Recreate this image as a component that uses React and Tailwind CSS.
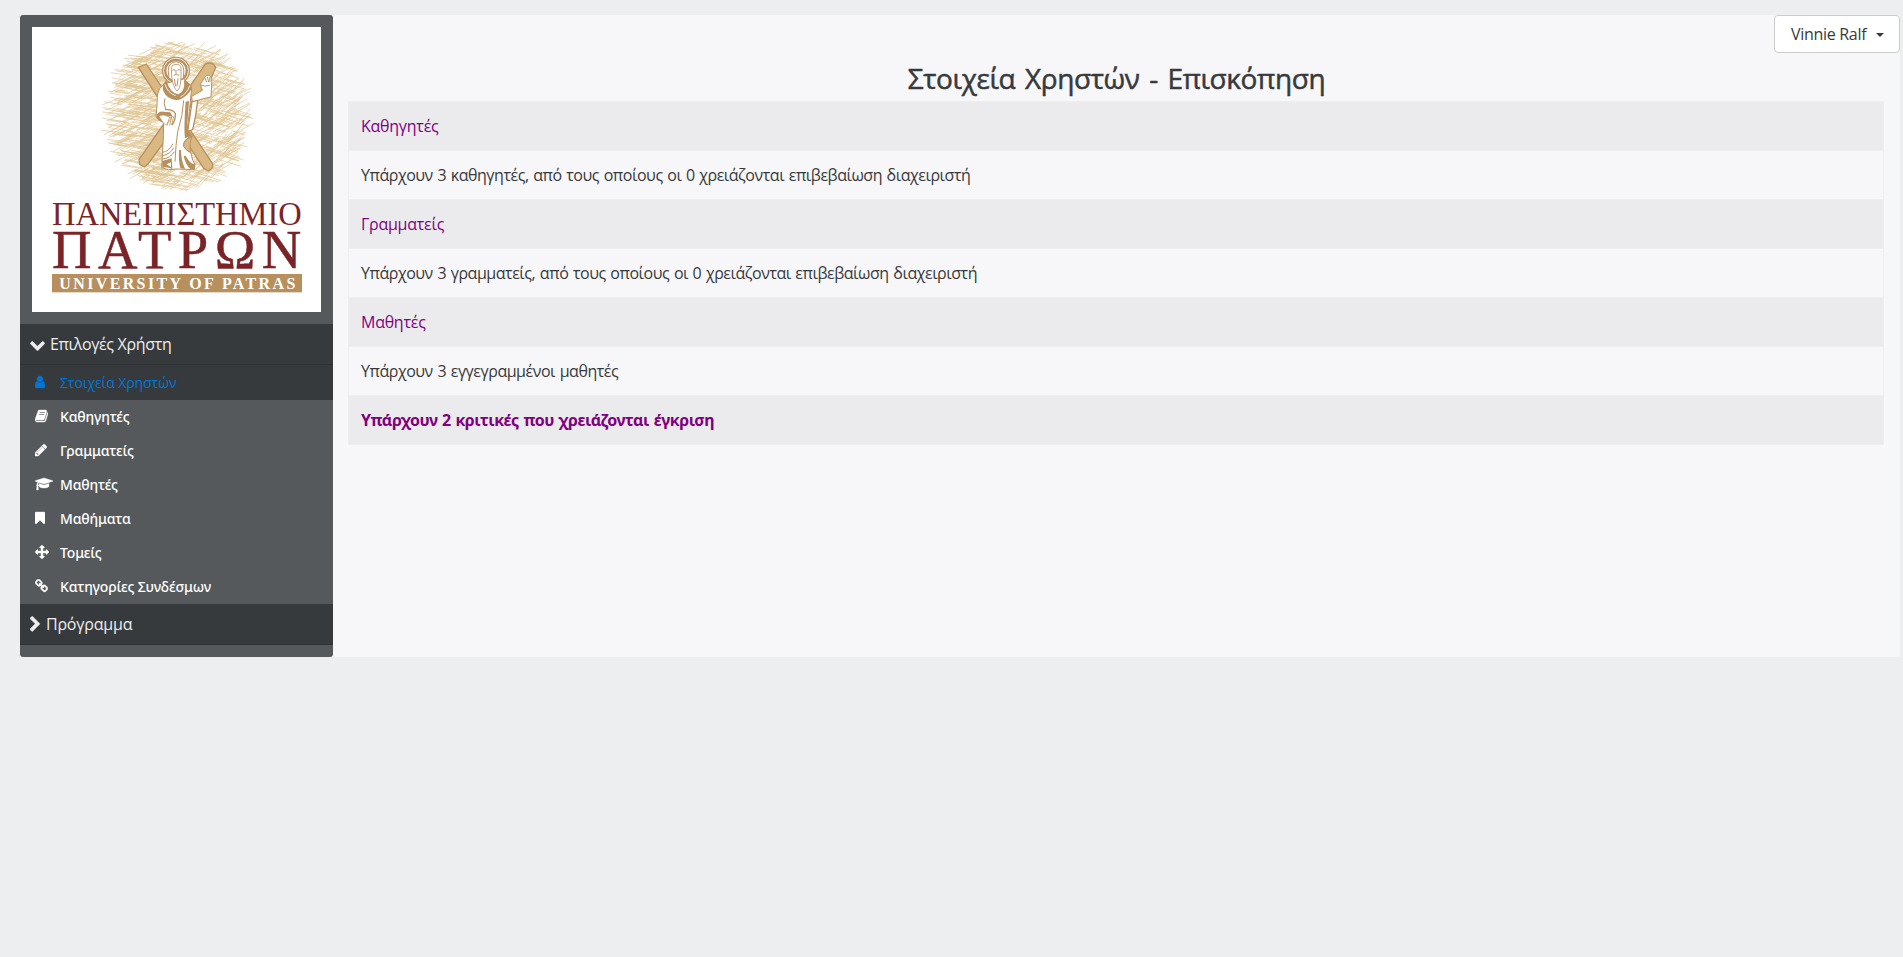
import React from 'react';

const ICONS = {
  down: {
    box: '65 180 1662 1400',
    d: 'M1683 808l-742 741q-19 19-45 19t-45-19l-742-741q-19-19-19-45.5t19-45.5l166-165q19-19 45-19t45 19l531 531 531-531q19-19 45-19t45 19l166 165q19 19 19 45.5t-19 45.5z',
  },
  right: {
    box: '340 0 1100 1700',
    d: 'M1363 877l-742 742q-19 19-45 19t-45-19l-166-166q-19-19-19-45t19-45l531-531-531-531q-19-19-19-45t19-45l166-166q19-19 45-19t45 19l742 742q19 19 19 45t-19 45z',
  },
  user: {
    box: '256 0 1280 1792',
    d: 'M1536 1399q0 109-62.5 187t-150.5 78h-854q-88 0-150.5-78t-62.5-187q0-85 8.5-160.5t31.5-152 58.5-131 94-89 134.5-34.5q131 128 313 128t313-128q76 0 134.5 34.5t94 89 58.5 131 31.5 152 8.5 160.5zm-256-887q0 159-112.5 271.5t-271.5 112.5-271.5-112.5-112.5-271.5 112.5-271.5 271.5-112.5 271.5 112.5 112.5 271.5z',
  },
  book: {
    box: '64 0 1664 1792',
    d: 'M1703 478q40 57 18 129l-275 906q-19 64-76.5 107.5t-122.5 43.5h-923q-77 0-148.5-53.5t-99.5-131.5q-24-67-2-127 0-4 3-27t4-37q1-8-3-21.5t-3-19.5q2-11 8-21t16.5-23.5 16.5-23.5q23-38 45-91.5t30-91.5q3-10 .5-30t-.5-28q3-11 17-28t17-23q21-36 42-92t25-90q1-9-2.5-32t.5-28q4-13 22-30.5t22-22.5q19-26 42.5-84.5t27.5-96.5q1-8-3-25.5t-2-26.5q2-8 9-18t18-23 17-21q8-12 16.5-30.5t15-35 16-36 19.5-32 26.5-23.5 36-11.5 47.5 5.5l-1 3q38-9 51-9h761q74 0 114 56t18 130l-274 906q-36 119-71.5 153.5t-128.5 34.5h-869q-27 0-38 15-11 16-1 43 24 70 144 70h923q29 0 56-15.5t35-41.5l300-987q7-22 5-57 38 15 59 43zm-1064 2q-4 13 2 22.5t20 9.5h608q13 0 25.5-9.5t16.5-22.5l21-64q4-13-2-22.5t-20-9.5h-608q-13 0-25.5 9.5t-16.5 22.5zm-83 256q-4 13 2 22.5t20 9.5h608q13 0 25.5-9.5t16.5-22.5l21-64q4-13-2-22.5t-20-9.5h-608q-13 0-25.5 9.5t-16.5 22.5z',
  },
  pencil: {
    box: '128 0 1536 1792',
    d: 'M491 1536l91-91-235-235-91 91v107h128v128h107zm523-928q0-22-22-22-10 0-17 7l-542 542q-7 7-7 17 0 22 22 22 10 0 17-7l542-542q7-7 7-17zm-54-192l416 416-832 832h-416v-416zm683 96q0 53-37 90l-166 166-416-416 166-165q36-38 90-38 53 0 91 38l235 234q37 39 37 91z',
  },
  cap: {
    box: '0 0 2304 1792',
    d: 'M1774 836l18 316q4 69-82 128t-235 93.5-323 34.5-323-34.5-235-93.5-82-128l18-316 574 181q22 7 48 7t48-7zm530-324q0 23-22 31l-1120 352q-4 1-10 1t-10-1l-652-206q-43 34-71 111.5t-34 178.5q63 36 63 109 0 69-58 107l58 433q2 14-8 25-9 11-24 11h-192q-15 0-24-11-10-11-8-25l58-433q-58-38-58-107 0-73 65-111 11-207 98-330l-333-104q-22-8-22-31t22-31l1120-352q4-1 10-1t10 1l1120 352q22 8 22 31z',
  },
  bookmark: {
    box: '256 0 1280 1792',
    d: 'M1420 128q23 0 44 9 33 13 52.5 41t19.5 62v1289q0 34-19.5 62t-52.5 41q-19 8-44 8-48 0-83-32l-441-424-441 424q-36 33-83 33-23 0-44-9-33-13-52.5-41t-19.5-62v-1289q0-34 19.5-62t52.5-41q21-9 44-9h1048z',
  },
  arrows: {
    box: '0 0 1792 1792',
    d: 'M1792 896q0 26-19 45l-256 256q-19 19-45 19t-45-19-19-45v-128h-384v384h128q26 0 45 19t19 45-19 45l-256 256q-19 19-45 19t-45-19l-256-256q-19-19-19-45t19-45 45-19h128v-384h-384v128q0 26-19 45t-45 19-45-19l-256-256q-19-19-19-45t19-45l256-256q19-19 45-19t45 19 19 45v128h384v-384h-128q-26 0-45-19t-19-45 19-45l256-256q19-19 45-19t45 19l256 256q19 19 19 45t-19 45-45 19h-128v384h384v-128q0-26 19-45t45-19 45 19l256 256q19 19 19 45z',
  },
  link: {
    box: '64 0 1664 1792',
    d: 'M1520 1216q0-40-28-68l-208-208q-28-28-68-28-42 0-72 32 3 3 19 18.5t21.5 21.5 15 19 13 25.5 3.5 27.5q0 40-28 68t-68 28q-15 0-27.5-3.5t-25.5-13-19-15-21.5-21.5-18.5-19q-33 31-33 73 0 40 28 68l206 207q27 27 68 27 40 0 68-26l147-146q28-28 28-67zm-703-705q0-40-28-68l-206-207q-28-28-68-28-39 0-68 27l-147 146q-28 28-28 67 0 40 28 68l208 208q27 27 68 27 42 0 72-31-3-3-19-18.5t-21.5-21.5-15-19-13-25.5-3.5-27.5q0-40 28-68t68-28q15 0 27.5 3.5t25.5 13 19 15 21.5 21.5 18.5 19q33-31 33-73zm895 705q0 120-85 203l-147 146q-83 83-203 83-121 0-204-85l-206-207q-83-83-83-203 0-123 88-209l-88-88q-86 88-208 88-120 0-204-84l-208-208q-84-84-84-204t85-203l147-146q83-83 203-83 121 0 204 85l206 207q83 83 83 203 0 123-88 209l88 88q86-88 208-88 120 0 204 84l208 208q84 84 84 204z',
  },
};

function Icon({ name, className }) {
  const icon = ICONS[name];
  return (
    <svg viewBox={icon.box} className={'shrink-0 fill-current stroke-current ' + className} preserveAspectRatio="xMinYMid meet">
      <path d={icon.d} strokeWidth="50" />
    </svg>
  );
}

// Deterministic pencil hatching that fills the disc behind the figure.
function makeHatching() {
  let seed = 11;
  const rnd = () => {
    seed = (seed * 16807) % 2147483647;
    return seed / 2147483647;
  };
  const families = [
    { angle: 9, count: 330, side: -1 },
    { angle: -26, count: 230, side: -1 },
    { angle: -28, count: 200, side: 1 },
    { angle: -46, count: 130, side: 1 },
    { angle: 16, count: 200, side: 1 },
  ];
  let d = '';
  families.forEach(({ angle, count, side }) => {
    for (let i = 0; i < count; i++) {
      const t = rnd() * Math.PI * 2;
      const r = Math.sqrt(rnd());
      let x = 502 + Math.cos(t) * r * 202;
      const y = 333 + Math.sin(t) * r * 218;
      if (side < 0 && x > 540) x = 1004 - x;
      if (side > 0 && x < 440) x = 1004 - x;
      const half = 14 + rnd() * 24;
      const a = ((angle + (rnd() - 0.5) * 7) * Math.PI) / 180;
      const dx = Math.cos(a) * half;
      const dy = Math.sin(a) * half;
      d += `M${(x - dx).toFixed(1)} ${(y - dy).toFixed(1)}L${(x + dx).toFixed(1)} ${(y + dy).toFixed(1)}`;
    }
  });
  return d;
}
const HATCHING = makeHatching();

function Logo() {
  return (
    <svg viewBox="66 66 867 855" className="block h-[285px] w-[289px] bg-white" preserveAspectRatio="none">
      <path d={HATCHING} stroke="#dfc592" strokeWidth="2.1" fill="none" strokeLinecap="round" />
      <g transform="translate(255 90)" strokeLinejoin="round">
        <path d="M130 97L154 87L350 382Q357 392 350 401L340 408L326 400Z" fill="#dab882" stroke="#b8905d" strokeWidth="4" />
        <path d="M330 88Q342 80 356 88L362 98L350 125L160 386L148 396L134 388L132 374L318 106Z" fill="#dab882" stroke="#b8905d" strokeWidth="4" />
        <circle cx="243" cy="107" r="42" fill="#b8905d" />
        <circle cx="243" cy="107" r="37.5" fill="none" stroke="#fff" strokeWidth="2.5" />
        <circle cx="243" cy="107" r="29" fill="#fff" />
        <path d="M222 128Q212 82 243 80Q273 82 265 128" fill="#fff" stroke="#b8905d" strokeWidth="3" />
        <path d="M316 148L329 127Q335 118 343 121Q352 128 350 150L348 186Q322 190 292 202L290 184Q305 176 322 166Z" fill="#fff" stroke="#b8905d" strokeWidth="3" />
        <path d="M330 128l5 14M337 125l4 16M344 127l1 15M318 150q12 6 26 1" fill="none" stroke="#b8905d" strokeWidth="3" />
        <path d="M291 200L308 196Q304 240 293 284L278 290Z" fill="#fff" stroke="#b8905d" strokeWidth="4" />
        <path d="M208 146Q190 160 187 180Q187 212 183 244Q190 258 206 262Q206 300 203 345L200 398L220 404L246 402L298 404Q304 390 292 372L288 354Q264 340 266 326Q272 308 292 303L277 284L284 220L290 160Q282 142 266 132Z" fill="#fff" stroke="#b8905d" strokeWidth="3" />
        <path d="M214 134Q200 150 204 166Q214 194 246 196Q274 190 292 158Q282 142 267 135Q272 168 250 178Q224 174 214 134Z" fill="#b8905d" />
        <path d="M210 148q8 26 32 34M284 152q-8 24-28 34" fill="none" stroke="#fff" strokeWidth="2.5" />
        <path d="M229 98Q230 88 243 88Q257 88 258 98L258 120Q258 160 246 168Q234 158 230 124Z" fill="#fff" stroke="#b8905d" strokeWidth="2.5" />
        <path d="M232 106q5-4 9 0M247 106q5-4 9 0M243 106v10M236 121q8-6 16 0M238 132l4 22M249 130l-3 24" fill="none" stroke="#a67c48" strokeWidth="2.5" />
        <path d="M183 246Q188 228 206 230L226 232L234 246Q222 240 210 248L206 262Q190 260 183 246Z" fill="#b8905d" />
        <path d="M210 224Q234 222 241 236Q242 256 231 270" fill="none" stroke="#b8905d" strokeWidth="4" />
        <path d="M192 244q12-8 26 0l12 4-8 12-10 10-8-8z" fill="#fff" stroke="#b8905d" strokeWidth="2" />
        <path d="M224 246l-8 26M230 244l-6 28M236 244l-6 26" stroke="#b8905d" strokeWidth="2.5" />
        <path d="M210 190q-6 16 2 32M266 196Q264 240 248 290Q242 330 240 380" fill="none" stroke="#b8905d" strokeWidth="3" />
        <path d="M272 200L282 198L276 280L290 302L270 310Q266 280 272 200Z" fill="#b8905d" />
        <path d="M202 352Q222 350 234 326M202 362Q226 358 236 338M202 372Q226 370 238 350" fill="none" stroke="#b8905d" strokeWidth="3" />
        <path d="M201 378L230 370L232 402Q214 394 202 398ZM252 345Q250 378 256 400L270 402Q258 374 258 345ZM266 364Q272 390 286 402L300 402L300 388Q284 386 272 362Z" fill="#b8905d" />
        <path d="M292 303Q262 318 266 334Q272 346 288 352Q280 328 292 303Z" fill="#dab882" stroke="#b8905d" strokeWidth="3" />
        <path d="M214 388l14-6v14z" fill="#fff" />
      </g>
      <g fill="#7b2427" fontFamily="'Liberation Serif', serif">
        <text x="126" y="659" fontSize="98" textLength="749" lengthAdjust="spacingAndGlyphs">ΠΑΝΕΠΙΣΤΗΜΙΟ</text>
        <text x="126" y="788" fontSize="164" textLength="748" stroke="#7b2427" strokeWidth="1.5" lengthAdjust="spacing">ΠΑΤΡΩΝ</text>
      </g>
      <rect x="126" y="807" width="750" height="55" fill="#b8905d" />
      <text x="148" y="851" fontSize="48" fontWeight="700" fill="#fff" fontFamily="'Liberation Serif', serif" textLength="708" lengthAdjust="spacing">UNIVERSITY OF PATRAS</text>
    </svg>
  );
}

const MENU = [
  { icon: 'book', size: 'h-[14px] w-[13px]', label: 'Καθηγητές' },
  { icon: 'pencil', size: 'h-[14px] w-[12px]', label: 'Γραμματείς' },
  { icon: 'cap', size: 'h-[14px] w-[18px]', label: 'Μαθητές' },
  { icon: 'bookmark', size: 'h-[14px] w-[10px]', label: 'Μαθήματα' },
  { icon: 'arrows', size: 'h-[14px] w-[14px]', label: 'Τομείς' },
  { icon: 'link', size: 'h-[14px] w-[13px]', label: 'Κατηγορίες Συνδέσμων' },
];

const ROWS = [
  { kind: 'link', text: 'Καθηγητές' },
  { kind: 'text', text: 'Υπάρχουν 3 καθηγητές, από τους οποίους οι 0 χρειάζονται επιβεβαίωση διαχειριστή' },
  { kind: 'link', text: 'Γραμματείς' },
  { kind: 'text', text: 'Υπάρχουν 3 γραμματείς, από τους οποίους οι 0 χρειάζονται επιβεβαίωση διαχειριστή' },
  { kind: 'link', text: 'Μαθητές' },
  { kind: 'text', text: 'Υπάρχουν 3 εγγεγραμμένοι μαθητές' },
  { kind: 'bold', text: 'Υπάρχουν 2 κριτικές που χρειάζονται έγκριση' },
];

const ROW_STYLE = {
  link: 'bg-[#ebebed] text-[#800080] tracking-[-0.25px]',
  text: 'text-[#373a3c] tracking-[-0.46px] [word-spacing:0.9px]',
  bold: "bg-[#ebebed] text-[#800080] font-bold font-['Noto_Sans',sans-serif] tracking-[-0.46px] [word-spacing:0.9px]",
};

export default function App() {
  return (
    <div className="min-h-screen bg-[#eceeef] pt-[15px] pr-[3px] pl-5 font-['Open_Sans','Noto_Sans',sans-serif] text-base leading-6 text-[#373a3c]">
      <div className="flex h-[642px] bg-[#f7f7f9]">
        <aside className="w-[313px] shrink-0 rounded-[3px] bg-[#55595c] pt-3 text-white">
          <div className="px-3 pb-3">
            <Logo />
          </div>
          <div className="flex h-[41px] items-center border-b border-[#2f3335] bg-[#373a3c] pl-[10px] text-[#eceeef]">
            <Icon name="down" className="mt-px h-[13px] w-[15px]" />
            <span className="ml-[5px] tracking-[-0.34px]">Επιλογές Χρήστη</span>
          </div>
          <div className="flex h-[35px] items-center bg-[#373a3c] pl-[15px] text-sm text-[#0275d8]">
            <div className="mb-[2px] flex w-[25px]">
              <Icon name="user" className="h-[14px] w-[10px]" />
            </div>
            <span className="tracking-[-0.08px]">Στοιχεία Χρηστών</span>
          </div>
          {MENU.map((item) => (
            <div key={item.label} className="flex h-[34px] items-center pl-[15px] text-sm font-medium">
              <div className="mb-[2px] flex w-[25px]">
                <Icon name={item.icon} className={item.size} />
              </div>
              <span className="font-['Noto_Sans',sans-serif] tracking-[-0.15px]">{item.label}</span>
            </div>
          ))}
          <div className="flex h-[41px] items-center border-b border-[#2f3335] bg-[#373a3c] pl-[10px] text-[#eceeef]">
            <Icon name="right" className="h-[16px] w-[11px]" />
            <span className="ml-[5px] tracking-[-0.2px]">Πρόγραμμα</span>
          </div>
        </aside>
        <main className="flex min-w-0 flex-1 flex-col">
          <div className="flex justify-end">
            <button className="flex h-[38px] w-[126px] items-center rounded-[4px] border border-[#cccccc] bg-white pl-4">
              <span className="tracking-[-0.3px]">Vinnie Ralf</span>
              <span className="ml-auto mr-[15px] mt-px h-0 w-0 border-x-[4.5px] border-t-[4.5px] border-x-transparent border-t-[#373a3c]" />
            </button>
          </div>
          <h1 className="mt-[10px] mb-[7px] text-center text-[28px] leading-[31px] tracking-[-0.4px] [word-spacing:2.8px] [-webkit-text-stroke:0.5px_#373a3c]">
            Στοιχεία Χρηστών - Επισκόπηση
          </h1>
          <div className="mr-4 ml-[15px] border border-t-0 border-[#eceeef]">
            {ROWS.map((row, i) => (
              <div key={i} className={'flex h-[49px] items-center border-t border-[#eceeef] pl-3 ' + ROW_STYLE[row.kind]}>
                {row.text}
              </div>
            ))}
          </div>
        </main>
      </div>
    </div>
  );
}
